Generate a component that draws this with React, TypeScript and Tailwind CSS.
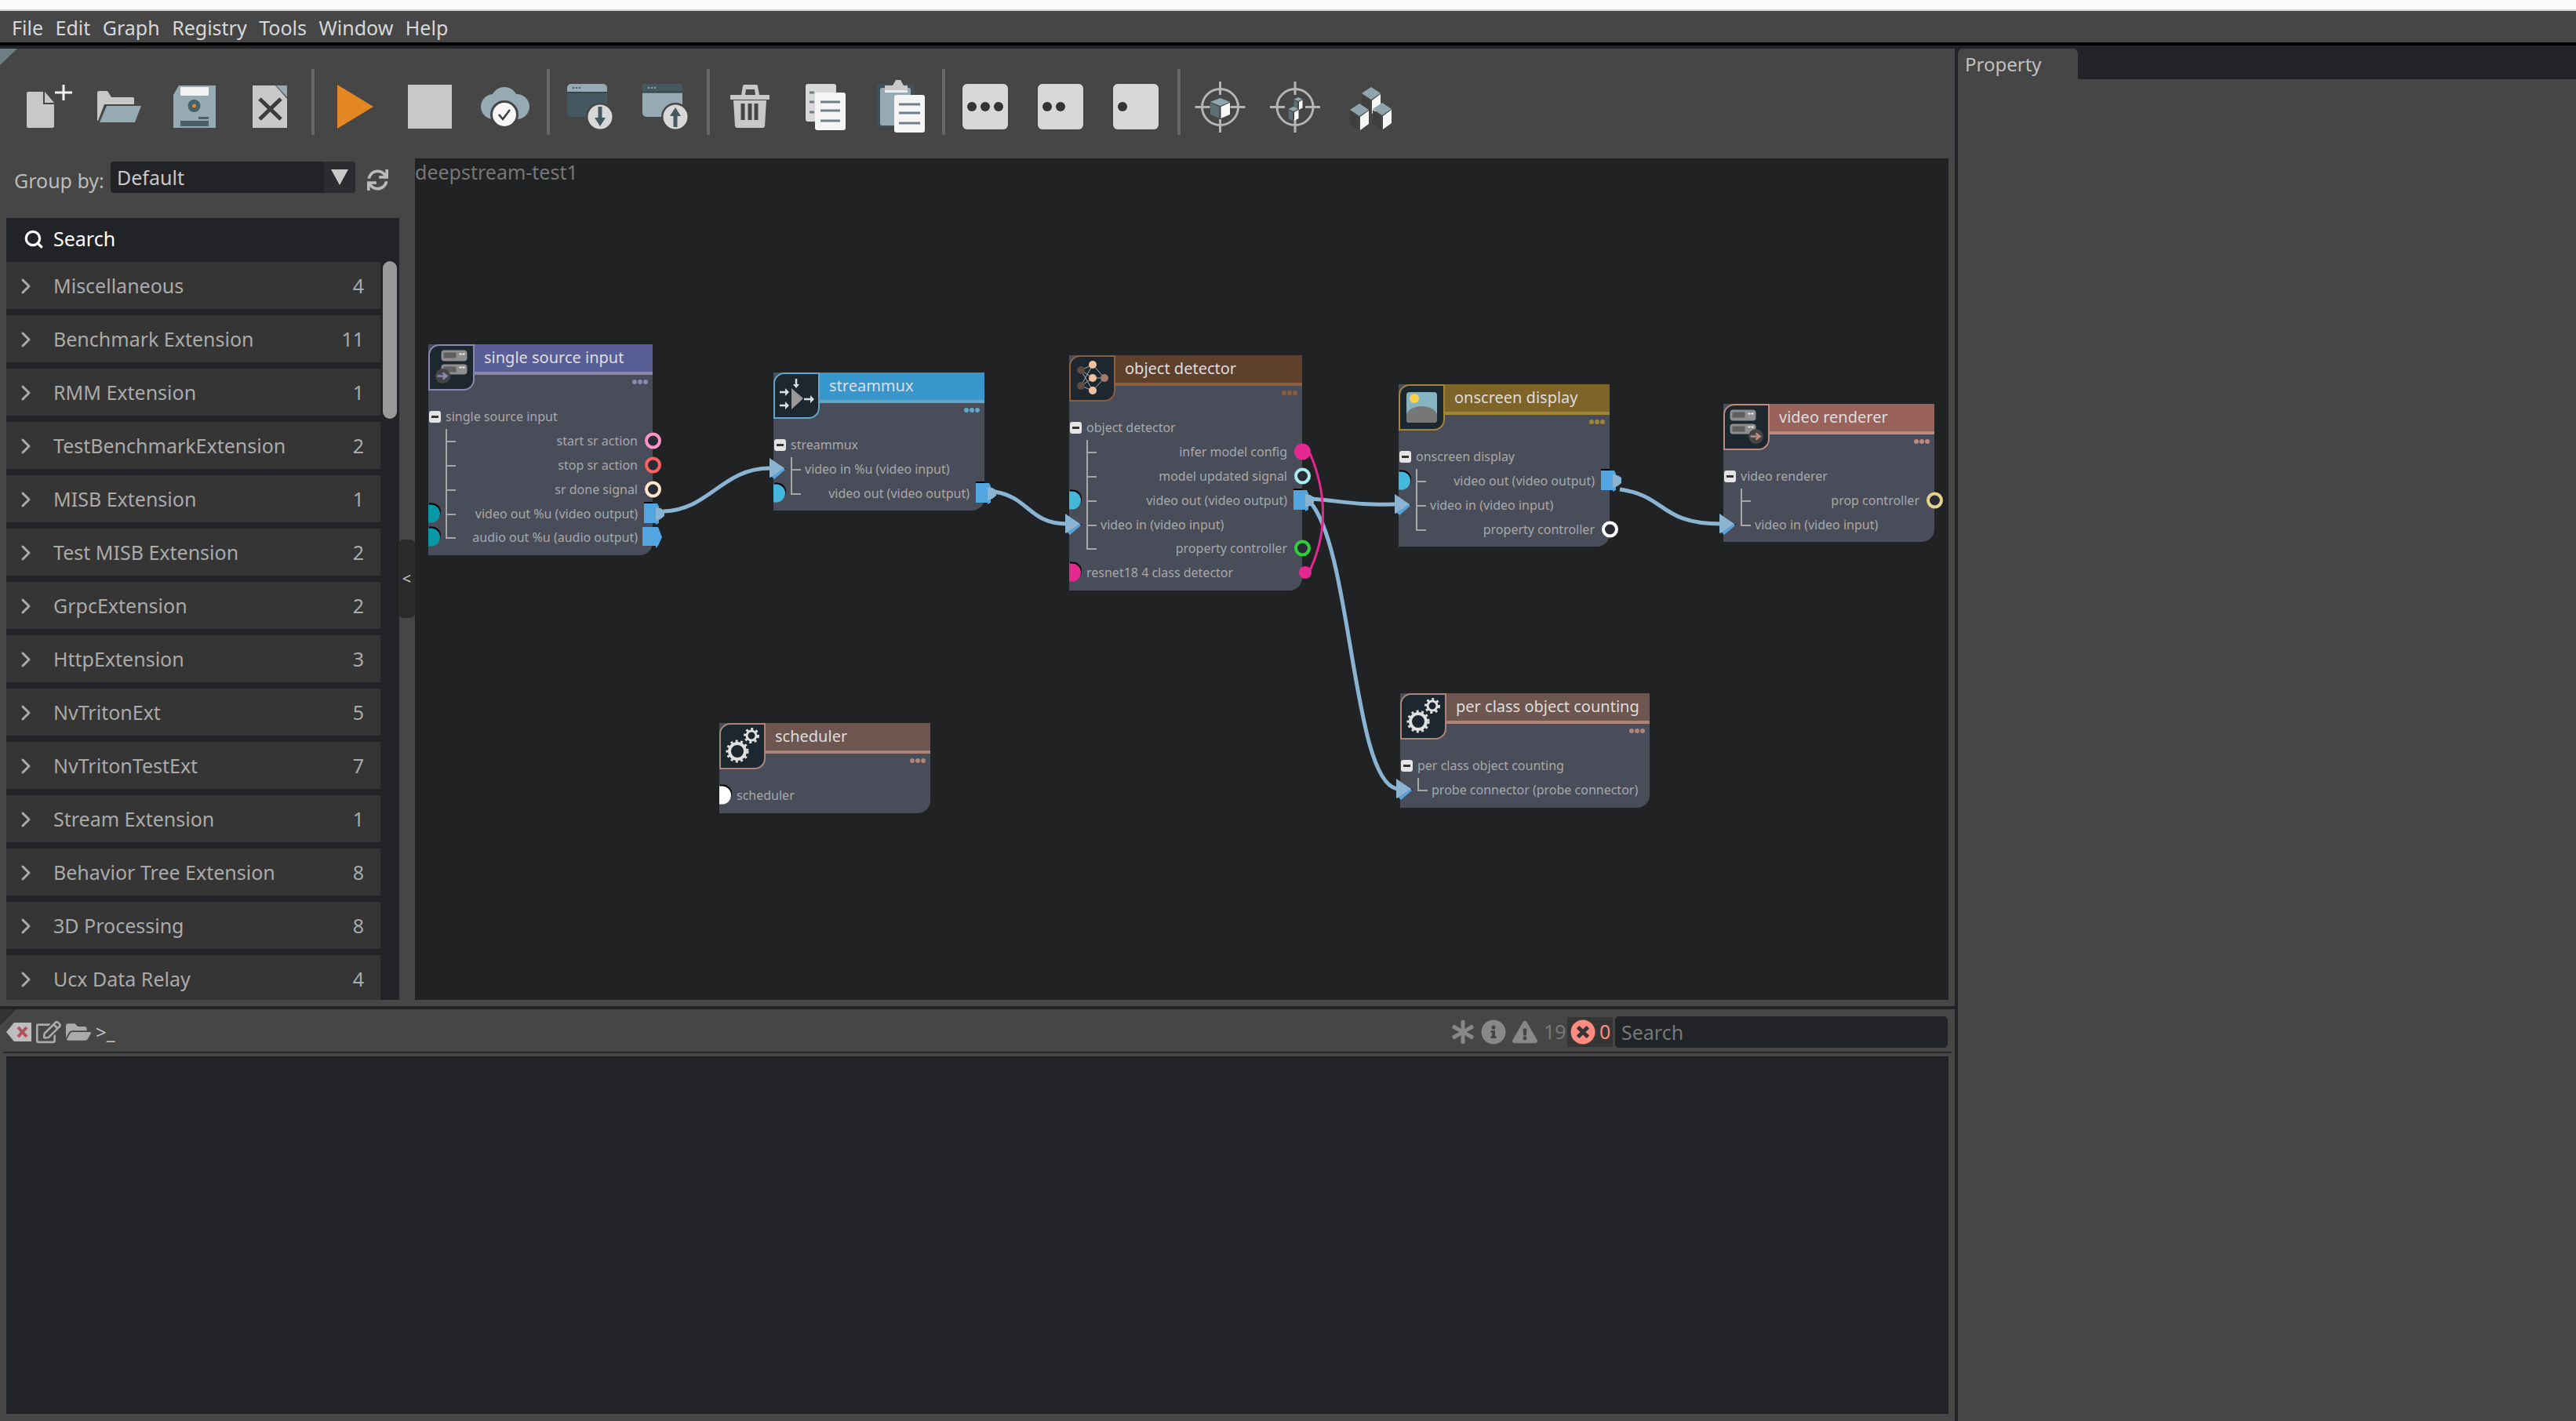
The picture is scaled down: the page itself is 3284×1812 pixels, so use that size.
import React from "react";
import { Search, ChevronRight } from "lucide-react";
import { FaSync, FaRegEdit, FaFolderOpen, FaAsterisk, FaInfoCircle, FaExclamationTriangle, FaTimesCircle } from "react-icons/fa";

const GREY = "#c8c8c8";
const STEEL = "#95aab2";
const SLATE = "#44585f";

function Cube({ cx, t, w, h, H, dark = "#3f3f3f" }: { cx: number; t: number; w: number; h: number; H: number; dark?: string }) {
  return (
    <g>
      <polygon points={`${cx},${t} ${cx + w},${t + h} ${cx},${t + 2 * h} ${cx - w},${t + h}`} fill="#8fa5ad" />
      <polygon points={`${cx - w},${t + h + 1} ${cx - 1},${t + 2 * h + 1} ${cx - 1},${t + 2 * h + H} ${cx - w},${t + h + H}`} fill={dark} />
      <polygon points={`${cx + w},${t + h + 1} ${cx + 1},${t + 2 * h + 1} ${cx + 1},${t + 2 * h + H} ${cx + w},${t + h + H}`} fill="#f7f7f7" />
    </g>
  );
}

function Crosshair({ cx }: { cx: number }) {
  return (
    <g stroke="#b4b4b4" strokeWidth="3" fill="none">
      <circle cx={cx} cy="48.5" r="23" />
      <path d={`M${cx} 16V33M${cx} 64V81M${cx - 32} 48.5H${cx - 13}M${cx + 13} 48.5H${cx + 32}`} />
    </g>
  );
}

function WindowIcon({ up }: { up: boolean }) {
  return (
    <>
      <rect x="18" y="19" width="51" height="42" rx="5" fill={up ? STEEL : SLATE} />
      <path d="M18 29v-5a5 5 0 0 1 5-5h41a5 5 0 0 1 5 5v5z" fill={up ? SLATE : STEEL} />
      <path d="M18 29h51v1.5H18z" fill="#3a3a3a" />
      <path d="M25 24h2M29 24h2M33 24h2" stroke={up ? "#95aab2" : "#44585f"} strokeWidth="2" />
      <circle cx="60" cy="61" r="18" fill="#464646" />
      <circle cx="60" cy="61" r="15.5" fill="#d8d8d8" />
      {up ? (
        <path d="M60 49l7 11h-4.5v14h-5V60H53z" fill={SLATE} />
      ) : (
        <path d="M57.5 48h5v14H67l-7 11-7-11h4.5z" fill={SLATE} />
      )}
    </>
  );
}

const toolIcons: React.ReactNode[] = [
  <g key="new">
    <path d="M25 31a2 2 0 0 1 2-2h19v16h14v28a2 2 0 0 1-2 2H27a2 2 0 0 1-2-2z" fill={GREY} />
    <path d="M48 29l12 14H48z" fill={GREY} />
    <path d="M61 30h22M72 20v20" stroke="#f2f2f2" strokeWidth="3" />
  </g>,
  <g key="open">
    <path d="M19 30a2 2 0 0 1 2-2h11l5 8h27a2 2 0 0 1 2 2v7H28l-8 21h-1z" fill={GREY} />
    <path d="M31 47h44l-8 21H22z" fill={STEEL} />
  </g>,
  <g key="save">
    <path d="M27 21h47v54H20V33z" fill={STEEL} />
    <rect x="29" y="23" width="36" height="11" fill="#f2f2f2" />
    <circle cx="46.5" cy="47" r="8" fill="#4a6068" />
    <circle cx="46.5" cy="47" r="2.5" fill="#e28722" />
    <rect x="52" y="61" width="13" height="3" fill="#4a5f66" />
    <rect x="29" y="66" width="36" height="7" fill="#4a5f66" />
  </g>,
  <g key="close">
    <path d="M25 21h29l15 17v37H25z" fill={GREY} />
    <path d="M55 21h14v15z" fill={STEEL} />
    <path d="M34 38l27 26M61 38L34 64" stroke="#3c3c3c" strokeWidth="5" />
  </g>,
  <polygon key="play" points="25,20 71,48 25,76" fill="#e28722" />,
  <rect key="stop" x="19" y="20" width="56" height="56" fill={GREY} />,
  <g key="cloud">
    <circle cx="46" cy="40" r="17" fill={STEEL} />
    <circle cx="32" cy="48" r="16" fill={STEEL} />
    <circle cx="62" cy="48" r="16" fill={STEEL} />
    <circle cx="46" cy="58" r="18" fill="#464646" />
    <circle cx="46" cy="58" r="15" fill="#f5f5f5" />
    <path d="M39 58l5 6 9-12" stroke="#3c3c3c" strokeWidth="2.5" fill="none" />
  </g>,
  <WindowIcon key="down" up={false} />,
  <WindowIcon key="up" up={true} />,
  <g key="trash">
    <path d="M26 40h42l-2 33a3 3 0 0 1-3 2H31a3 3 0 0 1-3-2z" fill={GREY} />
    <rect x="22" y="33" width="50" height="6" rx="1" fill={GREY} />
    <path d="M36 33l2-11a2 2 0 0 1 2-2h15a2 2 0 0 1 2 2l2 11h-5l-1-7H42l-1 7z" fill={GREY} />
    <path d="M38 44v21M47 44v21M55 44v21" stroke="#464646" strokeWidth="5" />
  </g>,
  <g key="copy">
    <rect x="22" y="19" width="39" height="48" rx="3" fill="#d8d8d8" />
    <path d="M27 30h6M27 42h6M27 55h6" stroke="#6e8085" strokeWidth="3" />
    <rect x="34" y="30" width="39" height="48" rx="3" fill="#f5f5f5" />
    <path d="M41 42h25M41 53h25M41 66h25" stroke="#6e8085" strokeWidth="3" />
  </g>,
  <g key="paste">
    <rect x="17" y="19" width="48" height="55" rx="2" fill="#3f5159" />
    <rect x="21" y="24" width="39" height="48" rx="2" fill={STEEL} />
    <path d="M27 29V21h10l4-7h6l4 7h5v8z" fill={GREY} />
    <rect x="27" y="27" width="29" height="3" fill="#ececec" />
    <rect x="39" y="33" width="39" height="48" rx="3" fill="#f5f5f5" />
    <path d="M45 45h27M45 56h27M45 69h27" stroke="#6e8085" strokeWidth="3" />
  </g>,
  <g key="d3">
    <rect x="18" y="19" width="58" height="58" rx="6" fill="#d8d8d8" />
    <circle cx="30" cy="48" r="6" fill="#333" />
    <circle cx="47" cy="48" r="6" fill="#333" />
    <circle cx="64" cy="48" r="6" fill="#333" />
  </g>,
  <g key="d2">
    <rect x="18" y="19" width="58" height="58" rx="6" fill="#d8d8d8" />
    <circle cx="30" cy="48" r="6" fill="#333" />
    <circle cx="47" cy="48" r="6" fill="#333" />
  </g>,
  <g key="d1">
    <rect x="18" y="19" width="58" height="58" rx="6" fill="#d8d8d8" />
    <circle cx="30" cy="48" r="6" fill="#333" />
  </g>,
  <g key="t1">
    <Crosshair cx={46.5} />
    <Cube cx={46.5} t={37} w={12.5} h={5} H={16} dark="#5a6f76" />
  </g>,
  <g key="t2">
    <Crosshair cx={46} />
    <Cube cx={50} t={36} w={5.5} h={2.5} H={11} dark="#5a6f76" />
    <Cube cx={44} t={48} w={6.5} h={3} H={12} dark="#5a6f76" />
  </g>,
  <g key="blocks">
    <Cube cx={47} t={23} w={12} h={8} H={18} />
    <Cube cx={32} t={44} w={12} h={8} H={18} />
    <Cube cx={61} t={43} w={12} h={8} H={18} />
  </g>,
];

function ToolButton({ i }: { i: number }) {
  return (
    <svg width="96" height="84" viewBox="0 0 96 84" className="shrink-0">
      {toolIcons[i]}
    </svg>
  );
}

function Sep() {
  return <div className="w-1 h-[84px] mx-1 bg-[#666666] shrink-0" />;
}

function Toolbar() {
  return (
    <div className="h-[140px] shrink-0 pt-[26px] pl-[9px] flex items-start">
      {[0, 1, 2, 3].map((i) => <ToolButton key={i} i={i} />)}
      <Sep />
      {[4, 5, 6].map((i) => <ToolButton key={i} i={i} />)}
      <Sep />
      {[7, 8].map((i) => <ToolButton key={i} i={i} />)}
      <Sep />
      {[9, 10, 11].map((i) => <ToolButton key={i} i={i} />)}
      <Sep />
      {[12, 13, 14].map((i) => <ToolButton key={i} i={i} />)}
      <Sep />
      {[15, 16, 17].map((i) => <ToolButton key={i} i={i} />)}
    </div>
  );
}

const groups: [string, string][] = [
  ["Miscellaneous", "4"],
  ["Benchmark Extension", "11"],
  ["RMM Extension", "1"],
  ["TestBenchmarkExtension", "2"],
  ["MISB Extension", "1"],
  ["Test MISB Extension", "2"],
  ["GrpcExtension", "2"],
  ["HttpExtension", "3"],
  ["NvTritonExt", "5"],
  ["NvTritonTestExt", "7"],
  ["Stream Extension", "1"],
  ["Behavior Tree Extension", "8"],
  ["3D Processing", "8"],
  ["Ucx Data Relay", "4"],
];

function LeftPanel() {
  return (
    <div className="w-[529px] shrink-0 relative pl-2 pt-1">
      <div className="flex h-10 items-start">
        <span className="w-[133px] pl-[10px] pt-[4px] text-[25px] leading-[40px] text-[#bbbbbb] whitespace-nowrap">Group by:</span>
        <div className="w-[312px] h-10 rounded-[4px] bg-[#222326] flex overflow-hidden">
          <span className="flex-1 pl-2 text-[25px] leading-[40px] text-[#c8c8c8]">Default</span>
          <div className="w-10 h-10 bg-[#2b2c2f] flex justify-center pt-[10px]">
            <div className="w-0 h-0 border-l-[11px] border-r-[11px] border-t-[20px] border-l-transparent border-r-transparent border-t-[#c8c8c8]" />
          </div>
        </div>
        <FaSync className="ml-[15px] mt-[10px] text-[#bbbbbb]" size={27} />
      </div>
      <div className="mt-8 w-[501px] h-[997px] bg-[#222326] overflow-hidden relative">
        <div className="h-14 pb-[2px] flex items-center pl-[22px] gap-3 text-white text-[25px]">
          <Search size={26} strokeWidth={3} />
          <span>Search</span>
        </div>
        {groups.map(([name, n]) => (
          <div key={name} className="w-[477px] h-[60px] mb-2 pt-[1px] bg-[#353535] flex items-center text-[25px] text-[#aaaaaa]">
            <ChevronRight className="ml-[9px] shrink-0" size={32} strokeWidth={2.2} />
            <span className="ml-[19px] flex-1">{name}</span>
            <span className="pr-[21px]">{n}</span>
          </div>
        ))}
        <div className="absolute left-[480px] top-[55px] w-[18px] h-[201px] rounded-full bg-[#9a9a9a]" />
      </div>
      <div className="absolute right-0 top-[486px] w-[21px] h-[100px] rounded-[6px] bg-[#2b2b2b] flex items-center justify-center text-[#c8c8c8] text-[20px] z-10">&lt;</div>
    </div>
  );
}

type Right =
  | { kind: "ring"; cls: string }
  | { kind: "fill"; cls: string }
  | { kind: "small"; cls: string }
  | { kind: "output" }
  | { kind: "audio" };

type Row = {
  label: string;
  side: "in" | "out" | "plain";
  tree?: boolean;
  last?: boolean;
  semi?: string;
  arrow?: boolean;
  right?: Right;
};

function OutPort() {
  return (
    <svg width="30" height="32" viewBox="0 0 30 32" className="absolute right-[-19px] top-1/2 -translate-y-1/2 z-10">
      <rect x="0" y="1" width="11" height="2" fill="#000" />
      <polygon points="0,3 17,3 19,7 19,28 15,30 15,28 0,28" fill="#53a5e0" />
      <polygon points="15,8 21,9 26,12 26,19 21,23 15,25" fill="#8ab4d2" />
    </svg>
  );
}

function AudioPort() {
  return (
    <svg width="26" height="28" viewBox="0 0 26 28" className="absolute right-[-13px] top-1/2 -translate-y-1/2 z-10">
      <polygon points="0,1 20,1 25,14 20,25 17,28 17,25 0,25" fill="#53a5e0" />
    </svg>
  );
}

function InPort() {
  return (
    <svg width="22" height="28" viewBox="0 0 22 28" className="absolute left-[-5px] top-1/2 -translate-y-1/2 z-20">
      <polygon points="6,27 20,15 19,13 3,24" fill="#53a5e0" />
      <polygon points="19,13 20,15 21,14" fill="#000" />
      <polygon points="0,0 19,13 3,24 0,25" fill="#8ab4d2" />
    </svg>
  );
}

function NodeRow({ r }: { r: Row }) {
  const align =
    r.side === "out" ? "justify-end pr-[19px]" : r.side === "in" ? "justify-start pl-[40px]" : "justify-start pl-[22px]";
  return (
    <div className={`relative h-[30.8px] flex items-center ${align}`}>
      {r.tree && (
        <>
          <div className={`absolute left-[22px] top-0 w-[2px] bg-[#a6a6a6] ${r.last ? "h-1/2" : "h-full"}`} />
          <div className="absolute left-[22px] top-1/2 w-[13px] h-[2px] bg-[#a6a6a6]" />
        </>
      )}
      <span className="text-[16px] text-[#a8a8a8] whitespace-nowrap">{r.label}</span>
      {r.semi && <div className={`absolute left-0 top-1/2 -translate-y-1/2 w-[15px] h-[23px] rounded-r-full shadow-[1px_-2px_0_#000] ${r.semi}`} />}
      {r.arrow && <InPort />}
      {r.right?.kind === "ring" && (
        <div className={`absolute right-[-11px] top-1/2 -translate-y-1/2 w-[21px] h-[21px] rounded-full border-[4px] bg-[#2a2c35] z-10 ${r.right.cls}`} />
      )}
      {r.right?.kind === "fill" && (
        <div className={`absolute right-[-11px] top-1/2 -translate-y-1/2 w-[21px] h-[21px] rounded-full z-10 ${r.right.cls}`} />
      )}
      {r.right?.kind === "small" && (
        <div className={`absolute right-[-12px] top-1/2 -translate-y-1/2 w-4 h-4 rounded-full z-10 ${r.right.cls}`} />
      )}
      {r.right?.kind === "output" && <OutPort />}
      {r.right?.kind === "audio" && <AudioPort />}
    </div>
  );
}

function ServerIcon({ c, rx, cx, cy }: { c: string; rx: number; cx: number; cy: number }) {
  return (
    <svg width="54" height="54" viewBox="0 0 54 54" className="absolute left-0 top-0">
      <g transform={`translate(${rx} 0)`}>
        <rect x="0" y="5.500" width="33" height="14" rx="4" fill="#8e8e8e" />
        <rect x="3" y="8.500" width="16" height="7" fill="#5f5f5f" />
        <path d="M23 10.500h3M27 10.500h3" stroke="#eee" strokeWidth="2" />
        <rect x="0" y="23.500" width="33" height="13" rx="4" fill="#8e8e8e" />
        <rect x="3" y="26.500" width="16" height="7" fill="#5f5f5f" />
        <path d="M23 27.500h3M27 27.500h3" stroke="#eee" strokeWidth="2" />
      </g>
      <circle cx={cx} cy={cy} r="9.5" fill="#454545" />
      <path d={`M${cx - 7} ${cy}h11m-4 -4l5 4-5 4`} stroke={c} strokeWidth="2.5" fill="none" />
    </svg>
  );
}

function MuxIcon() {
  return (
    <svg width="54" height="54" viewBox="0 0 54 54" className="absolute left-0 top-0">
      <polygon points="21,18 36,31 21,45" fill="#999" />
      <path d="M27 6v9M6 23h8M6 40h8M37 32h9" stroke="#ddd" strokeWidth="2.5" />
      <path d="M23 13l4 5 4-5zM13 18l5 5-5 5zM13 35l5 5-5 5zM45 27l5 5-5 5z" fill="#ddd" />
    </svg>
  );
}

function NeuralIcon() {
  const a = [[13, 17], [13, 37]];
  const b = [[28, 10], [28, 27], [28, 43]];
  return (
    <svg width="54" height="54" viewBox="0 0 54 54" className="absolute left-0 top-0">
      <g stroke="#aaa" strokeWidth="1">
        {a.map((p, i) => b.map((q, j) => <line key={`${i}${j}`} x1={p[0]} y1={p[1]} x2={q[0]} y2={q[1]} />))}
        {b.map((q, j) => <line key={j} x1={q[0]} y1={q[1]} x2={43} y2={27} />)}
      </g>
      {a.map((p, i) => <circle key={i} cx={p[0]} cy={p[1]} r="5" fill="#5f4a42" />)}
      {b.map((p, i) => <circle key={i} cx={p[0]} cy={p[1]} r="5" fill="#f0c3a0" />)}
      <circle cx="43" cy="27" r="5" fill="#a57a68" />
    </svg>
  );
}

function PictureIcon() {
  return (
    <svg width="54" height="54" viewBox="0 0 54 54" className="absolute left-0 top-0">
      <rect x="8" y="8" width="39" height="39" rx="4" fill="#85b5c3" />
      <path d="M8 43v-5c0-7 9-12 19.500-12S47 31 47 38v5a4 4 0 0 1-4 4H12a4 4 0 0 1-4-4z" fill="#777" />
      <circle cx="18" cy="16" r="6" fill="#ffd24a" />
    </svg>
  );
}

function Gear({ cx, cy, r, sw }: { cx: number; cy: number; r: number; sw: number }) {
  return (
    <g fill="none" stroke="#e0e0e0">
      <circle cx={cx} cy={cy} r={r} strokeWidth={sw} />
      <circle cx={cx} cy={cy} r={r + sw / 2 + 1} strokeWidth="3" strokeDasharray="3 3.500" />
    </g>
  );
}

function GearsIcon() {
  return (
    <svg width="54" height="54" viewBox="0 0 54 54" className="absolute left-0 top-0">
      <Gear cx={21} cy={34} r={10} sw={4} />
      <Gear cx={39} cy={14} r={6} sw={3} />
    </svg>
  );
}

type NodeProps = {
  pos: string;
  title: string;
  head: string;
  line: string;
  border: string;
  dot: string;
  group?: string;
  icon: React.ReactNode;
  rows: Row[];
};

function GraphNode({ pos, title, head, line, border, dot, group, icon, rows }: NodeProps) {
  return (
    <div className={`absolute bg-[#494d5a] rounded-br-[16px] pb-[7px] ${pos}`}>
      <div className="flex h-[39px]">
        <div className={`relative shrink-0 w-[59px] h-[59px] bg-[#1d2730] border-[2.5px] rounded-tl-[14px] rounded-br-[14px] z-10 ${border}`}>{icon}</div>
        <div className={`flex-1 h-[39px] border-b-4 pl-3 text-[20px] leading-[34px] text-[#dddddd] whitespace-nowrap ${head} ${line}`}>{title}</div>
      </div>
      <div className="h-[38px] flex justify-end items-start gap-[1px] pt-[6px] pr-[6px]">
        <i className={`w-[6px] h-[6px] rounded-full ${dot}`} />
        <i className={`w-[6px] h-[6px] rounded-full ${dot}`} />
        <i className={`w-[6px] h-[6px] rounded-full ${dot}`} />
      </div>
      {group && (
        <div className="h-[30.8px] flex items-center">
          <div className="ml-[1px] w-[15px] h-[15px] rounded-[3px] bg-[#e4e4e4] flex items-center justify-center">
            <div className="w-[9px] h-[3px] bg-[#333333]" />
          </div>
          <span className="ml-[6px] text-[16px] text-[#a8a8a8] whitespace-nowrap">{group}</span>
        </div>
      )}
      {rows.map((r) => <NodeRow key={r.label} r={r} />)}
    </div>
  );
}

function Wires() {
  return (
    <svg viewBox="529 202 1955 1073" className="absolute inset-0 w-full h-full pointer-events-none z-[5]">
      <g fill="none" stroke="#8ab4d2" strokeWidth="5">
        <path d="M846 652C905 650 920 597 982 597" />
        <path d="M1268 627C1312 634 1312 668 1360 668" />
        <path d="M1672 636C1720 640 1725 644 1780 643" />
        <path d="M1670 640C1724 700 1724 1000 1782 1006" />
        <path d="M2065 624C2125 632 2115 668 2194 668" />
      </g>
      <path d="M1670 578C1692 630 1692 680 1670 727" fill="none" stroke="#e5288f" strokeWidth="3" />
    </svg>
  );
}

function Canvas() {
  return (
    <div className="relative w-[1955px] h-[1073px] shrink-0 bg-[#212224]">
      <span className="absolute left-0 top-[-1px] text-[25px] text-[#777777]">deepstream-test1</span>
      <GraphNode
        pos="left-[17px] top-[237px] w-[286px]"
        title="single source input"
        head="bg-[#5a5e97]"
        line="border-[#8987b0]"
        border="border-[#8987b0]"
        dot="bg-[#8987b0]"
        group="single source input"
        icon={<ServerIcon c="#8987b0" rx={14.5} cx={16.5} cy={38.5} />}
        rows={[
          { label: "start sr action", side: "out", tree: true, right: { kind: "ring", cls: "border-[#ff94c6]" } },
          { label: "stop sr action", side: "out", tree: true, right: { kind: "ring", cls: "border-[#ff6060]" } },
          { label: "sr done signal", side: "out", tree: true, right: { kind: "ring", cls: "border-[#ffe6c8]" } },
          { label: "video out %u (video output)", side: "out", tree: true, semi: "bg-[#0898a5]", right: { kind: "output" } },
          { label: "audio out %u (audio output)", side: "out", tree: true, last: true, semi: "bg-[#0898a5]", right: { kind: "audio" } },
        ]}
      />
      <GraphNode
        pos="left-[457px] top-[273px] w-[269px]"
        title="streammux"
        head="bg-[#3797cd]"
        line="border-[#5fa8c9]"
        border="border-[#5fa8c9]"
        dot="bg-[#5fa8c9]"
        group="streammux"
        icon={<MuxIcon />}
        rows={[
          { label: "video in %u (video input)", side: "in", tree: true, arrow: true },
          { label: "video out (video output)", side: "out", tree: true, last: true, semi: "bg-[#44b8dc]", right: { kind: "output" } },
        ]}
      />
      <GraphNode
        pos="left-[834px] top-[251px] w-[297px]"
        title="object detector"
        head="bg-[#5f402c]"
        line="border-[#8b5f3e]"
        border="border-[#8b5f3e]"
        dot="bg-[#8b5f3e]"
        group="object detector"
        icon={<NeuralIcon />}
        rows={[
          { label: "infer model config", side: "out", tree: true, right: { kind: "fill", cls: "bg-[#e5288f]" } },
          { label: "model updated signal", side: "out", tree: true, right: { kind: "ring", cls: "border-[#a8eef0]" } },
          { label: "video out (video output)", side: "out", tree: true, semi: "bg-[#44b8dc]", right: { kind: "output" } },
          { label: "video in (video input)", side: "in", tree: true, arrow: true },
          { label: "property controller", side: "out", tree: true, last: true, right: { kind: "ring", cls: "border-[#2ecf3a]" } },
          { label: "resnet18 4 class detector", side: "plain", semi: "bg-[#e5288f]", right: { kind: "small", cls: "bg-[#e5288f]" } },
        ]}
      />
      <GraphNode
        pos="left-[1254px] top-[288px] w-[269px]"
        title="onscreen display"
        head="bg-[#7f642a]"
        line="border-[#a08438]"
        border="border-[#a08438]"
        dot="bg-[#a08438]"
        group="onscreen display"
        icon={<PictureIcon />}
        rows={[
          { label: "video out (video output)", side: "out", tree: true, semi: "bg-[#44b8dc]", right: { kind: "output" } },
          { label: "video in (video input)", side: "in", tree: true, arrow: true },
          { label: "property controller", side: "out", tree: true, last: true, right: { kind: "ring", cls: "border-white" } },
        ]}
      />
      <GraphNode
        pos="left-[1668px] top-[313px] w-[269px]"
        title="video renderer"
        head="bg-[#99625a]"
        line="border-[#bc8b80]"
        border="border-[#bc8b80]"
        dot="bg-[#bc8b80]"
        group="video renderer"
        icon={<ServerIcon c="#bc8b80" rx={6.5} cx={39.5} cy={39.5} />}
        rows={[
          { label: "prop controller", side: "out", tree: true, right: { kind: "ring", cls: "border-[#e2d48c]" } },
          { label: "video in (video input)", side: "in", tree: true, last: true, arrow: true },
        ]}
      />
      <GraphNode
        pos="left-[388px] top-[720px] w-[269px]"
        title="scheduler"
        head="bg-[#6d5550]"
        line="border-[#ad8478]"
        border="border-[#ad8478]"
        dot="bg-[#ad8478]"
        icon={<GearsIcon />}
        rows={[{ label: "scheduler", side: "plain", semi: "bg-white" }]}
      />
      <GraphNode
        pos="left-[1256px] top-[682px] w-[318px]"
        title="per class object counting"
        head="bg-[#6d5550]"
        line="border-[#ad8478]"
        border="border-[#ad8478]"
        dot="bg-[#ad8478]"
        group="per class object counting"
        icon={<GearsIcon />}
        rows={[{ label: "probe connector (probe connector)", side: "in", tree: true, last: true, arrow: true }]}
      />
      <Wires />
    </div>
  );
}

function ConsoleBar() {
  return (
    <div className="h-[54px] shrink-0 flex items-center relative pt-[3px]">
      <div className="absolute left-0 top-0 w-0 h-0 border-t-[21px] border-r-[21px] border-t-[#333333] border-r-transparent" />
      <svg width="34" height="24" viewBox="0 0 34 24" className="ml-2 shrink-0">
        <polygon points="0,12 10,0 32,0 32,24 10,24" fill="#bdbdbd" />
        <path d="M15 6l11 12M26 6L15 18" stroke="#b0545c" strokeWidth="4" />
      </svg>
      <FaRegEdit className="ml-[4px] text-[#aaaaaa]" size={32} />
      <FaFolderOpen className="ml-[6px] text-[#aaaaaa]" size={32} />
      <span className="ml-[6px] text-[24px] text-[#c8c8c8]">&gt;_</span>
      <div className="ml-auto flex items-center pr-[9px]">
        <FaAsterisk className="text-[#888888]" size={30} />
        <FaInfoCircle className="ml-2 text-[#888888]" size={32} />
        <FaExclamationTriangle className="ml-2 text-[#888888]" size={32} />
        <span className="ml-2 w-[30px] text-[25px] text-[#777777]">19</span>
        <div className="w-[58px] h-[38px] bg-[#353535] flex items-center pl-1 gap-[5px]">
          <FaTimesCircle className="text-[#ff8a80]" size={32} />
          <span className="text-[25px] text-[#ff8a80]">0</span>
        </div>
        <div className="ml-[3px] w-[424px] h-10 rounded-[5px] bg-[#222326] pl-2 text-[25px] leading-[40px] text-[#777777]">Search</div>
      </div>
    </div>
  );
}

const MENU = ["File", "Edit", "Graph", "Registry", "Tools", "Window", "Help"];

export default function App() {
  return (
    <div className="w-[3284px] h-[1812px] flex flex-col bg-[#464646] overflow-hidden font-['Noto_Sans',sans-serif]">
      <div className="h-3 bg-[#fafafa] shrink-0" />
      <div className="h-[2px] bg-[#d0d0d0] shrink-0" />
      <div className="h-10 shrink-0 pl-[15px] pt-1 flex items-center gap-[15.5px] text-[25px] text-[#d8d8d8]">
        {MENU.map((m) => <span key={m}>{m}</span>)}
      </div>
      <div className="h-1 bg-black shrink-0" />
      <div className="flex-1 flex min-h-0">
        <div className="w-[2492px] shrink-0 flex flex-col">
          <div className="h-1 bg-[#222326] shrink-0" />
          <div className="h-[1221px] shrink-0 flex flex-col relative">
            <div className="absolute left-0 top-0 w-0 h-0 border-t-[21px] border-r-[22px] border-t-[#6e7e85] border-r-transparent" />
            <Toolbar />
            <div className="flex">
              <LeftPanel />
              <Canvas />
            </div>
          </div>
          <div className="h-1 bg-[#222326] shrink-0" />
          <ConsoleBar />
          <div className="h-[2px] ml-1 w-[2484px] bg-[#2a2a2a] shrink-0" />
          <div className="h-[456px] ml-2 w-[2476px] mt-1 bg-[#222326] shrink-0" />
        </div>
        <div className="w-1 bg-[#222326] shrink-0" />
        <div className="flex-1 flex flex-col">
          <div className="h-[43px] shrink-0 bg-[#222326] flex items-end">
            <div className="w-[153px] h-[39px] bg-[#464646] rounded-t-[6px] pl-[9px] text-[24px] leading-[40px] text-[#c0c0c0]">Property</div>
          </div>
        </div>
      </div>
    </div>
  );
}
